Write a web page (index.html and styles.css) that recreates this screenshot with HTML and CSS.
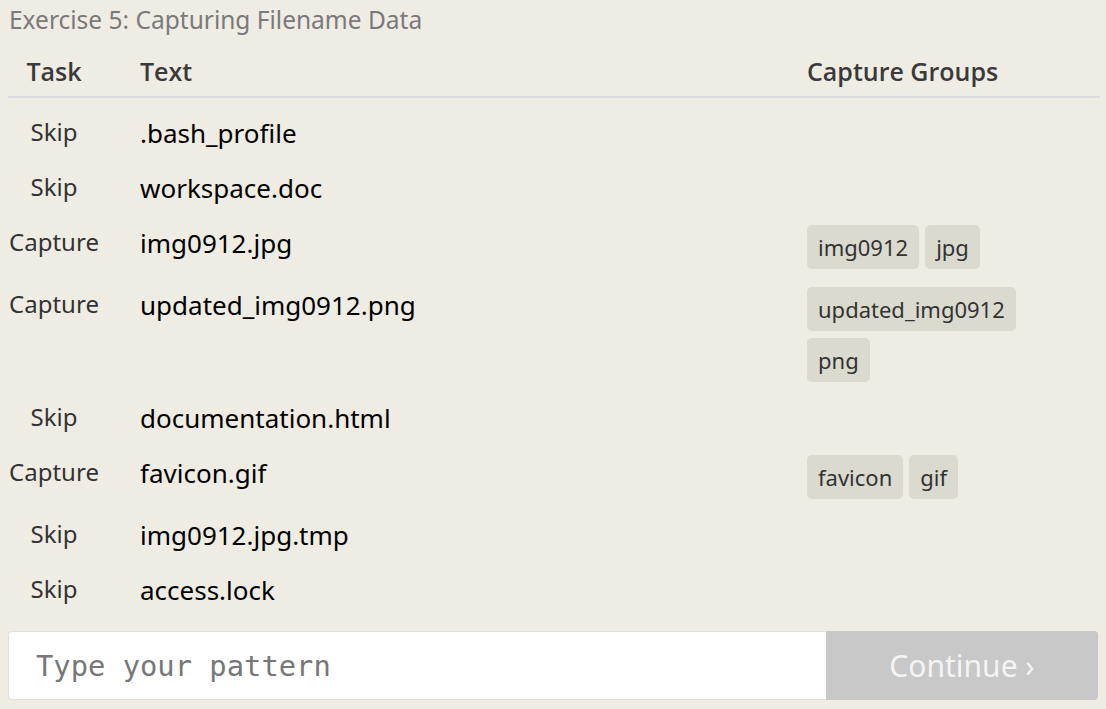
FILE: index.html
```html
<!DOCTYPE html>
<html>
<head>
<meta charset="utf-8">
<link rel="stylesheet" href="styles.css">
</head>
<body>
<div class="page">
  <div class="title">Exercise 5: Capturing Filename Data</div>
  <div class="table">
    <div class="row head">
      <div class="task">Task</div>
      <div class="text">Text</div>
      <div class="groups">Capture Groups</div>
    </div>
    <div class="rows">
      <div class="row">
        <div class="task">Skip</div>
        <div class="text">.bash_profile</div>
        <div class="groups"></div>
      </div>
      <div class="row">
        <div class="task">Skip</div>
        <div class="text">workspace.doc</div>
        <div class="groups"></div>
      </div>
      <div class="row">
        <div class="task">Capture</div>
        <div class="text">img0912.jpg</div>
        <div class="groups has"><span class="badge">img0912</span><span class="badge">jpg</span></div>
      </div>
      <div class="row">
        <div class="task">Capture</div>
        <div class="text">updated_img0912.png</div>
        <div class="groups has"><span class="badge">updated_img0912</span><span class="badge">png</span></div>
      </div>
      <div class="row">
        <div class="task">Skip</div>
        <div class="text">documentation.html</div>
        <div class="groups"></div>
      </div>
      <div class="row">
        <div class="task">Capture</div>
        <div class="text">favicon.gif</div>
        <div class="groups has"><span class="badge">favicon</span><span class="badge">gif</span></div>
      </div>
      <div class="row">
        <div class="task">Skip</div>
        <div class="text">img0912.jpg.tmp</div>
        <div class="groups"></div>
      </div>
      <div class="row">
        <div class="task">Skip</div>
        <div class="text">access.lock</div>
        <div class="groups"></div>
      </div>
    </div>
  </div>
  <div class="bar">
    <input class="input" type="text" placeholder="Type your pattern">
    <div class="btn">Continue ›</div>
  </div>
</div>
</body>
</html>
```

FILE: styles.css
```css
html, body {
  margin: 0;
  padding: 0;
  background: #efece4;
}
body {
  font-family: "Noto Sans", "Open Sans", sans-serif;
  color: #111;
}
.page {
  width: 1092px;
  padding: 0 6px 0 8px;
}
.title {
  font-size: 24.5px;
  line-height: 30px;
  padding: 5px 0 0 1px;
  color: #7a7a7a;
}
.table {
  display: flex;
  flex-direction: column;
}
.rows {
  display: flex;
  flex-direction: column;
  padding-top: 8px;
}
.row {
  display: grid;
  grid-template-columns: 92px 1fr 255px;
  column-gap: 40px;
  padding-right: 38px;
}
.row.head {
  font-family: "Open Sans", sans-serif;
  font-weight: 600;
  color: #383838;
  border-bottom: 2px solid #dcdcdc;
  padding-top: 19px;
  padding-bottom: 8px;
  line-height: 34px;
}
.row.head .task, .row.head .text, .row.head .groups {
  padding: 0;
  font-size: 25px;
  line-height: 34px;
  color: #3a3a3a;
}
.task {
  text-align: center;
  font-size: 24px;
  color: #333;
  line-height: 30px;
  padding: 11px 0 14px;
}
.text {
  font-size: 26px;
  line-height: 30px;
  padding: 12px 0 13px;
  color: #000;
}
.groups.has {
  display: flex;
  flex-wrap: wrap;
  align-content: flex-start;
  gap: 7px 6px;
  padding: 9px 0;
}
.badge {
  display: inline-block;
  background: #dadacf;
  border-radius: 5px;
  height: 44px;
  line-height: 44px;
  padding: 0 11px;
  font-size: 22px;
  color: #333;
}
.bar {
  display: flex;
  margin-top: 13px;
  margin-right: 2px;
  height: 69px;
}
.input {
  flex: 1;
  box-sizing: border-box;
  height: 69px;
  border: 1px solid #e2e0da;
  border-right: none;
  border-radius: 4px 0 0 4px;
  background: #fff;
  padding: 0 0 0 27px;
  font-family: "DejaVu Sans Mono", monospace;
  font-size: 28.8px;
  color: #333;
  outline: none;
}
.input::placeholder {
  color: #777;
}
.btn {
  width: 272px;
  background: #c8c8c8;
  border-radius: 0 4px 4px 0;
  color: #f4f4f4;
  font-size: 30px;
  line-height: 69px;
  text-align: center;
}
```
